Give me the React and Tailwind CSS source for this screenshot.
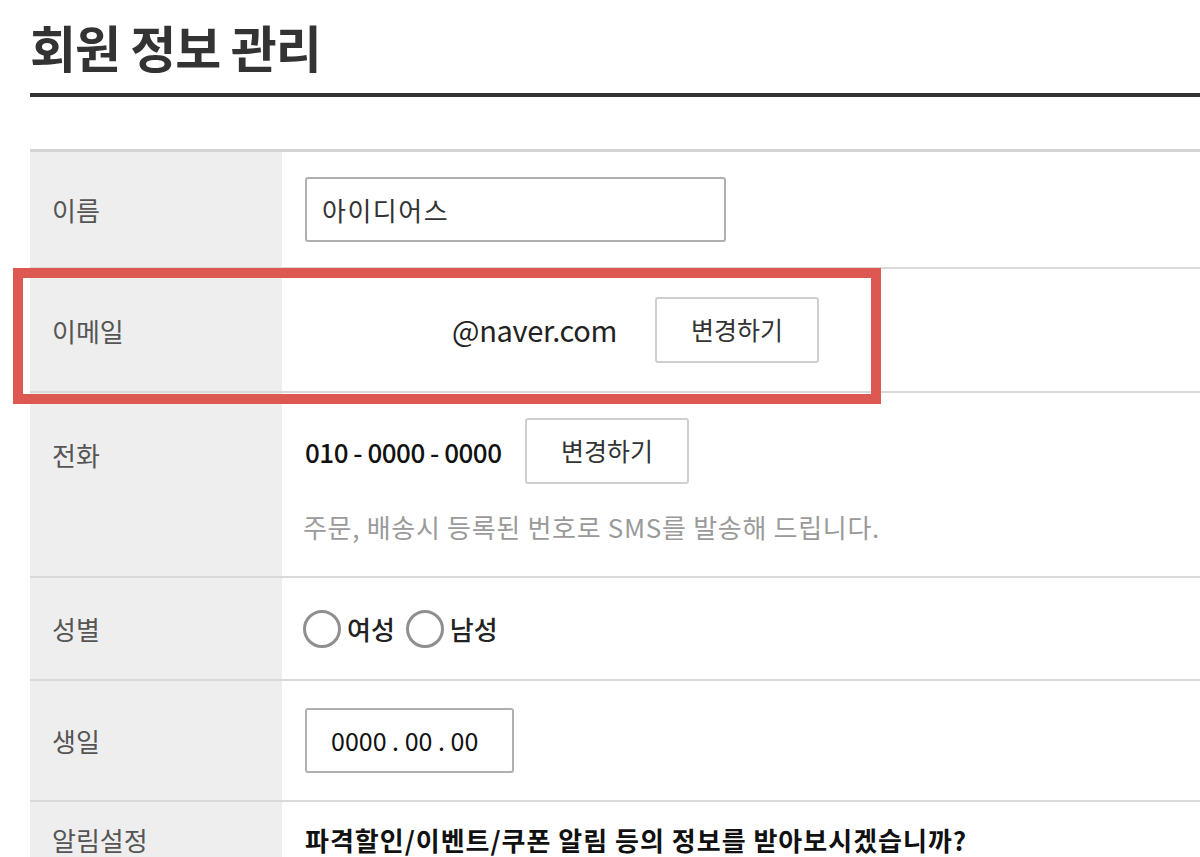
import React from 'react';

const font = { fontFamily: '"Noto Sans CJK KR", "Noto Sans", sans-serif' };

const Row = ({ label, height, top = false, children, labelPad = 'pt-0' }) => (
  <div className={`flex border-b-2 border-[#d9d9d9] ${height}`}>
    <div
      className={`w-[252px] shrink-0 bg-[#eeeeee] pl-[22px] text-[26px] text-[#555] flex ${
        top ? `items-start ${labelPad}` : 'items-center'
      }`}
    >
      {label}
    </div>
    <div className={`flex-1 pl-[23px] flex ${top ? 'flex-col justify-start' : 'items-center'}`}>
      {children}
    </div>
  </div>
);

const ChangeButton = () => (
  <button className="w-[164px] h-[66px] border-2 border-[#cfcfcf] rounded-[3px] bg-white text-[25px] text-[#333]">
    변경하기
  </button>
);

const Radio = ({ label }) => (
  <label className="flex items-center">
    <span className="w-[38px] h-[38px] rounded-full border-[3px] border-[#8f8f8f] bg-white" />
    <span className="ml-[6px] text-[26px] text-[#222] font-medium">{label}</span>
  </label>
);

export default function App() {
  return (
    <div className="relative min-h-screen bg-white overflow-hidden" style={font}>
      <div className="pl-[30px]">
        {/* Title */}
        <h1 className="pt-[14px] h-[93px] text-[50px] font-semibold text-[#333] leading-[64px] tracking-[-1px]">
          회원 정보 관리
        </h1>
        <div className="h-[4px] bg-[#333]" />

        {/* Table */}
        <div className="mt-[52px] border-t-[3px] border-[#d4d4d4]">
          <Row label="이름" height="h-[117px]">
            <div className="w-[421px] h-[65px] border-2 border-[#b0b0b0] rounded-[3px] flex items-center pl-[15px] text-[26px] text-[#333] tracking-[1.5px]">
              아이디어스
            </div>
          </Row>

          <Row label="이메일" height="h-[124px]">
            <span className="ml-[147px] w-[174px] text-[29px] text-[#222] tracking-[-0.3px]">@naver.com</span>
            <span className="ml-[29px]">
              <ChangeButton />
            </span>
          </Row>

          <Row label="전화" height="h-[185px]" top labelPad="pt-[42px]">
            <div className="flex items-center pt-[25px]">
              <span className="w-[200px] text-[26px] font-medium text-[#111] tracking-[-0.5px]">010 - 0000 - 0000</span>
              <span className="ml-[20px]">
                <ChangeButton />
              </span>
            </div>
            <p className="mt-[23px] -ml-[2px] text-[26px] text-[#9a9a9a] tracking-[0.7px]">
              주문, 배송시 등록된 번호로 SMS를 발송해 드립니다.
            </p>
          </Row>

          <Row label="성별" height="h-[103px]">
            <div className="flex items-center gap-[11px] -ml-[2px]">
              <Radio label="여성" />
              <Radio label="남성" />
            </div>
          </Row>

          <Row label="생일" height="h-[121px]">
            <div className="w-[209px] h-[65px] border-2 border-[#b0b0b0] rounded-[3px] flex items-center pl-[24px] text-[25px] text-[#111]">
              0000 . 00 . 00
            </div>
          </Row>

          <Row label="알림설정" height="h-[120px]" top labelPad="pt-[18px]">
            <p className="pt-[18px] text-[26px] font-bold text-[#111] tracking-[1px]">
              파격할인/이벤트/쿠폰 알림 등의 정보를 받아보시겠습니까?
            </p>
          </Row>
        </div>
      </div>

      {/* highlight overlay */}
      <div className="absolute left-[13px] top-[268px] w-[868px] h-[136px] border-[10px] border-[#dc5850] pointer-events-none" />
    </div>
  );
}
